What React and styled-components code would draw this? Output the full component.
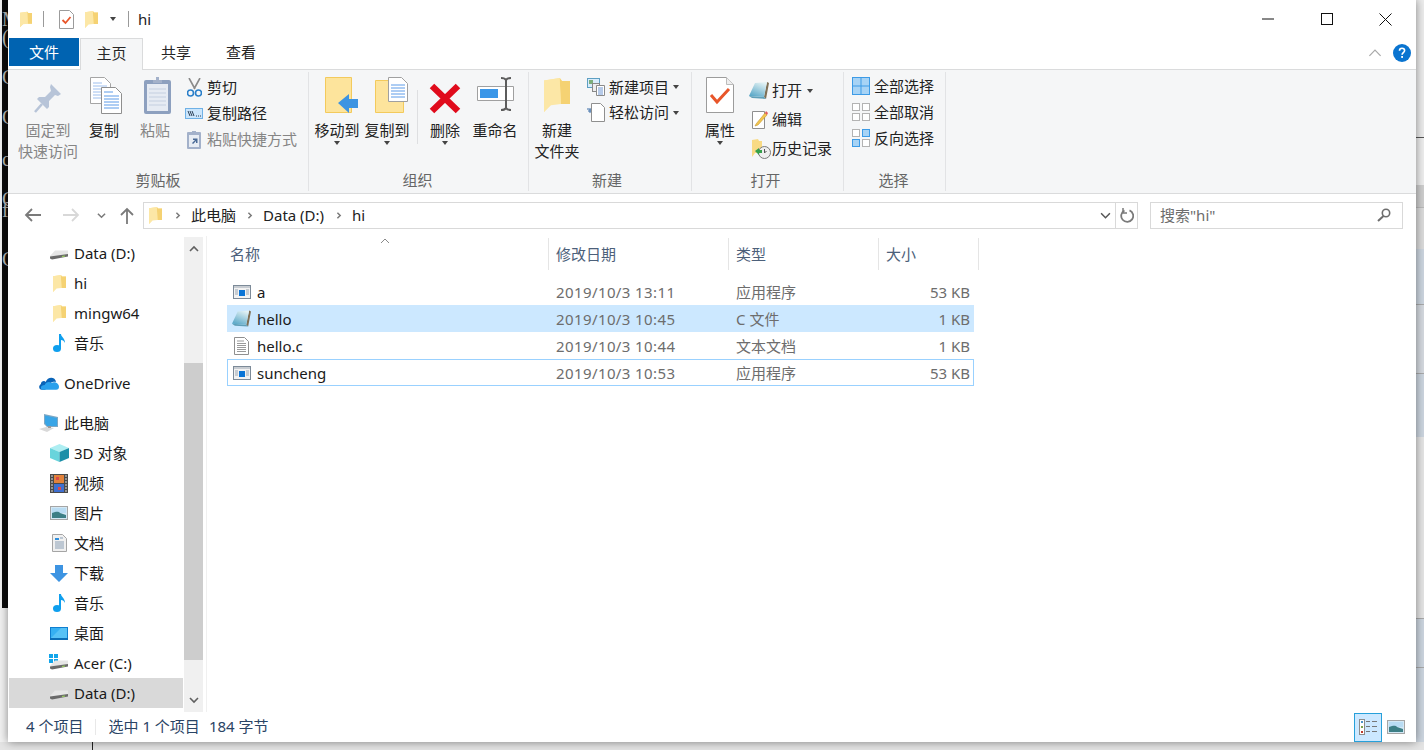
import styled, { createGlobalStyle } from "styled-components";

const GlobalStyle = createGlobalStyle`
  html, body { margin: 0; padding: 0; overflow: hidden; background: #f0f0f0; }
  body { font: 15px/1 "Noto Sans", "Noto Sans CJK SC", sans-serif; color: #1c1c1c; }
`;

const Page = styled.div`
  display: grid;
  grid-template-columns: 8px 1fr 8px;
  grid-template-rows: 742px 8px;
  width: 1424px;
  height: 750px;
  overflow: hidden;
`;

/* stuff peeking out behind the explorer window */
const Terminal = styled.div`
  height: 608px;
  margin-left: 2px;
  background: #0c0c0c;
  overflow: hidden;
  font: 20px/11px "Liberation Serif", serif;
  color: #b9b9b9;
`;
const TermChar = styled.div`
  margin-top: ${(p) => p.$gap}px;
`;
const LeftStrip = styled.div`
  background: #f2f2f2;
`;
const RightStrip = styled.div`
  display: flex;
  flex-direction: column;
  background: #f0f0f0;
`;
const BackRow = styled.div`
  height: ${(p) => p.$h}px;
  flex: none;
  background: ${(p) => p.$bg};
  border-bottom: 1px solid ${(p) => p.$line || "transparent"};
`;
const BottomStrip = styled.div`
  grid-column: 1 / -1;
  background: #e4e4e4;
  padding-left: 92px;
`;
const BackLine = styled.div`
  width: 1px;
  height: 8px;
  background: #222;
`;

const Window = styled.div`
  position: relative;
  z-index: 1;
  display: flex;
  flex-direction: column;
  background: #fff;
  box-shadow: 0 0 9px rgba(0, 0, 0, 0.45);
  min-width: 0;
`;

const TitleBar = styled.div`
  display: flex;
  align-items: center;
  height: 38px;
  flex: none;
  padding-left: 12px;
`;
const QuickSlot = styled.span`
  display: flex;
  justify-content: center;
  align-items: center;
  width: ${(p) => p.$w}px;
`;
const TitleSep = styled.span`
  width: 1px;
  height: 16px;
  background: #9a9a9a;
`;
const TitleText = styled.span`
  margin-left: 9px;
  font-size: 15px;
  color: #222;
`;
const WinButtons = styled.div`
  display: flex;
  margin-left: auto;
  margin-right: 1px;
`;
const WinButton = styled.span`
  display: flex;
  justify-content: center;
  align-items: center;
  width: 59px;
  height: 38px;
`;

const TabBar = styled.div`
  display: flex;
  align-items: flex-start;
  height: 31px;
  flex: none;
  padding-left: 1px;
`;
const FileTab = styled.div`
  width: 70px;
  height: 28px;
  line-height: 28px;
  margin-right: 1px;
  text-align: center;
  color: #fff;
  background: #0063b1;
`;
const Tab = styled.div`
  width: ${(p) => p.$w}px;
  height: ${(p) => (p.$active ? 32 : 28)}px;
  line-height: 28px;
  text-align: center;
  color: #262626;
  box-sizing: border-box;
  position: relative;
  z-index: 2;
  ${(p) =>
    p.$active &&
    "background: #f5f6f7; border: 1px solid #dadbdc; border-bottom: none;"}
`;
const RibbonTools = styled.div`
  display: flex;
  align-items: center;
  gap: 11px;
  height: 30px;
  margin-left: auto;
  margin-right: 5px;
`;

const Ribbon = styled.div`
  display: flex;
  height: 125px;
  flex: none;
  box-sizing: border-box;
  padding: 2px 0 2px;
  background: #f5f6f7;
  border-top: 1px solid #dadbdc;
  border-bottom: 1px solid #dadbdc;
`;
const Group = styled.div`
  display: flex;
  flex-direction: column;
  width: ${(p) => p.$w}px;
  box-sizing: border-box;
  border-right: 1px solid #e2e3e5;
`;
const GroupBody = styled.div`
  display: flex;
  flex: 1;
  padding: 5px 0 0 ${(p) => p.$pad}px;
`;
const GroupLabel = styled.div`
  height: 21px;
  line-height: 21px;
  padding-right: ${(p) => p.$shift || 0}px;
  text-align: center;
  color: #666;
`;
const BigButton = styled.div`
  display: flex;
  flex-direction: column;
  align-items: center;
  width: ${(p) => p.$w}px;
  flex: none;
  color: ${(p) => (p.$off ? "#858585" : "#222")};
`;
const BigIcon = styled.div`
  display: flex;
  justify-content: center;
  align-items: ${(p) => p.$align || "flex-start"};
  height: 43px;
  padding-left: ${(p) => p.$shift || 0}px;
`;
const BigLabel = styled.div`
  line-height: 21px;
  text-align: center;
  white-space: nowrap;
`;
const Caret = styled.span`
  display: inline-block;
  flex: none;
  width: 0;
  height: 0;
  border: 3.5px solid transparent;
  border-top: 4px solid #444;
  border-bottom: none;
  margin-left: ${(p) => p.$ml || 0}px;
`;
const BigSep = styled.div`
  width: 1px;
  height: 54px;
  margin: 13px 5px 0;
  background: #dedfe1;
`;
const SmallColumn = styled.div`
  display: flex;
  flex-direction: column;
  margin-left: ${(p) => p.$ml || 0}px;
  margin-top: ${(p) => p.$mt || 0}px;
`;
const SmallRow = styled.div`
  display: flex;
  align-items: center;
  height: ${(p) => p.$h}px;
  white-space: nowrap;
  color: ${(p) => (p.$off ? "#858585" : "#222")};
`;
const SmallIcon = styled.span`
  display: flex;
  align-items: center;
  box-sizing: border-box;
  width: ${(p) => p.$w || 22}px;
  padding-left: ${(p) => p.$pl || 0}px;
  flex: none;
`;

const AddressBar = styled.div`
  display: flex;
  align-items: center;
  height: 42px;
  flex: none;
  padding-left: 6px;
`;
const NavButton = styled.span`
  display: flex;
  justify-content: center;
  align-items: center;
  width: ${(p) => p.$w}px;
`;
const AddressBox = styled.div`
  display: flex;
  align-items: center;
  width: 995px;
  height: 27px;
  margin-left: 1px;
  box-sizing: border-box;
  border: 1px solid #d9d9d9;
  padding-left: 5px;
  color: #222;
`;
const CrumbSep = styled.span`
  display: flex;
  margin: 0 9px 0 ${(p) => p.$ml}px;
`;
const AddressEnd = styled.span`
  display: flex;
  margin-left: auto;
  margin-right: 4px;
`;
const Refresh = styled.span`
  display: flex;
  justify-content: center;
  align-items: center;
  width: 21px;
  height: 25px;
  border-left: 1px solid #d9d9d9;
`;
const SearchBox = styled.div`
  display: flex;
  align-items: center;
  justify-content: space-between;
  width: 253px;
  height: 27px;
  margin-left: 12px;
  box-sizing: border-box;
  border: 1px solid #d9d9d9;
  padding: 0 11px 0 9px;
  color: #6d6d6d;
`;

const Content = styled.div`
  display: flex;
  flex: 1;
  min-height: 0;
  padding-left: 1px;
`;
const Sidebar = styled.div`
  width: 174px;
  flex: none;
  padding-top: 2px;
`;
const SideRow = styled.div`
  display: flex;
  align-items: center;
  height: 30px;
  margin-top: ${(p) => (p.$spaced ? 10 : 0)}px;
  padding-left: ${(p) => p.$indent}px;
  background: ${(p) => (p.$selected ? "#d9d9d9" : "transparent")};
  color: #1a1a1a;
`;
const SideIcon = styled.span`
  display: flex;
  justify-content: center;
  align-items: center;
  width: 20px;
  margin-right: 5px;
  flex: none;
`;
const Scrollbar = styled.div`
  display: flex;
  flex-direction: column;
  align-items: center;
  justify-content: space-between;
  width: 19px;
  flex: none;
  margin: 1px 3px 0 1px;
  background: #f0f0f0;
`;
const ScrollArrow = styled.span`
  display: flex;
  align-items: center;
  height: 24px;
`;
const ScrollThumb = styled.div`
  flex: none;
  width: 19px;
  height: 297px;
  margin-top: 101px;
  margin-bottom: 28px;
  background: #cdcdcd;
`;
const Main = styled.div`
  flex: 1;
  border-left: 1px solid #f0f0f0;
  padding: 2px 0 0 16px;
`;

const columns = "326px 180px 150px 100px";
const HeaderRow = styled.div`
  display: grid;
  grid-template-columns: ${columns};
  height: 32px;
  position: relative;
`;
const HeaderCell = styled.div`
  display: flex;
  align-items: center;
  box-sizing: border-box;
  padding-left: 7px;
  border-right: 1px solid #e5e5e5;
  color: #4c607a;
`;
const SortMark = styled.span`
  position: absolute;
  left: 157px;
  top: -2px;
  display: flex;
`;
const FileList = styled.div`
  margin: 8px 0 0 4px;
  width: 747px;
`;
const rowBorder = (p) => {
  if (p.$focused) return "#99d1ff";
  if (p.$selected) return "#cce8ff";
  return "transparent";
};
const FileRow = styled.div`
  display: grid;
  grid-template-columns: 322px 180px 150px 95px;
  align-items: center;
  height: 27px;
  box-sizing: border-box;
  border-width: 1px;
  border-style: solid;
  border-color: ${rowBorder};
  background: ${(p) => (p.$selected ? "#cce8ff" : "transparent")};
`;
const NameCell = styled.div`
  display: flex;
  align-items: center;
  padding-top: 2px;
  color: #1a1a1a;
`;
const FileIcon = styled.span`
  display: flex;
  justify-content: center;
  box-sizing: border-box;
  width: 23px;
  padding-left: 4px;
  margin: -2px 6px 0 0;
`;
const InfoCell = styled.div`
  padding-top: 2px;
  padding-left: ${(p) => (p.$right ? 0 : 6)}px;
  padding-right: ${(p) => (p.$right ? 5 : 0)}px;
  text-align: ${(p) => (p.$right ? "right" : "left")};
  letter-spacing: ${(p) => (p.$wide ? 0.4 : 0)}px;
  color: #6d6d6d;
  white-space: nowrap;
`;

const StatusBar = styled.div`
  display: flex;
  align-items: center;
  height: 30px;
  flex: none;
  box-sizing: border-box;
  padding: 0 11px 0 18px;
  color: #2a4465;
`;
const StatusSep = styled.span`
  width: 1px;
  height: 16px;
  margin: 0 12px;
  background: #e8e8e8;
`;
const StatusText = styled.span`
  margin-right: ${(p) => p.$mr || 0}px;
  margin-top: -2px;
`;
const ViewButtons = styled.div`
  display: flex;
  align-items: center;
  gap: 5px;
  margin-left: auto;
`;
const ViewButton = styled.span`
  display: flex;
  justify-content: center;
  align-items: center;
  width: 28px;
  height: 29px;
  box-sizing: border-box;
  background: #cce8ff;
  border: 1px solid #26a0da;
`;

/* ---- icons ---- */
const FolderIcon = ({ w = 13, h = 17 }) => (
  <svg width={w} height={h} viewBox="0 0 13 17">
    <path d="M0 1.2 8 0l1 1.5h4V13H3.5L0 17z" fill="#fde59f" />
    <path d="M7.8 0 9 1.5h4V13H8.5z" fill="#f5d273" />
    <path d="M0 1.2 7.8 0l.7 13-5 .6L0 17z" fill="#fce7a6" />
  </svg>
);
const TaskIcon = ({ w = 15, h = 19 }) => (
  <svg width={w} height={h} viewBox="0 0 15 19">
    <path d="M.5.5h10l4 4v14H.5z" fill="#fff" stroke="#9b9b9b" />
    <path d="M3.5 10l3 3 5-6" fill="none" stroke="#e8562a" strokeWidth="1.8" />
  </svg>
);
const PinIcon = () => (
  <svg width="28" height="30" viewBox="0 0 28 30">
    <path d="M17 0l10 10-3 2-3-1-6 6v6l-2 2L3 15l2-2h6l6-6-1-4z" fill="#b7c4d8" />
    <path d="M8 20l-7 8" stroke="#b7c4d8" strokeWidth="2.500" />
  </svg>
);
const CopyIcon = () => (
  <svg width="32" height="37" viewBox="0 0 32 37">
    <path d="M.5.5h14l6 6v20H.5z" fill="#fff" stroke="#a5a5a5" />
    <path d="M3 6h9M3 9h14M3 12h14M3 15h14M3 18h14M3 21h14" stroke="#9ebfee" />
    <path d="M11.5 10.5h14l6 6v20h-20z" fill="#fff" stroke="#8f8f8f" />
    <path d="M14 15h9M14 19h15M14 22h15M14 25h15M14 28h15M14 31h15" stroke="#5d9be8" />
  </svg>
);
const PasteIcon = () => (
  <svg width="27" height="37" viewBox="0 0 27 37">
    <rect x="0" y="3" width="27" height="34" rx="2" fill="#8da0bf" />
    <rect x="3" y="7" width="21" height="27" fill="#e6ebf3" />
    <path d="M5 12h17M5 16h17M5 20h17M5 24h17M5 28h17" stroke="#c4cfe0" />
    <path d="M9 6V3h3V0h3v3h3v3z" fill="#a3b1ca" />
  </svg>
);
const ScissorsIcon = () => (
  <svg width="15" height="19" viewBox="0 0 15 19">
    <path d="M2 0l6 11M13 0L7 11" stroke="#8a8a8a" strokeWidth="1.6" />
    <circle cx="3.5" cy="15" r="3" fill="none" stroke="#2b7fc9" strokeWidth="1.6" />
    <circle cx="11.5" cy="15" r="3" fill="none" stroke="#2b7fc9" strokeWidth="1.6" />
  </svg>
);
const PathIcon = () => (
  <svg width="18" height="11" viewBox="0 0 18 11">
    <rect x=".5" y=".5" width="17" height="10" fill="#cbe5fb" stroke="#6fb1e6" />
    <path d="M3 3l2 5M5 3l2 5M7 3l2 5" stroke="#2c3f55" />
    <path d="M11 8h1M13 8h1M15 8h1" stroke="#2c3f55" />
  </svg>
);
const ShortcutIcon = () => (
  <svg width="14" height="19" viewBox="0 0 14 19">
    <rect x="0" y="2" width="14" height="17" rx="1" fill="#a3b1ca" />
    <rect x="2" y="5" width="10" height="12" fill="#e8edf4" />
    <path d="M5 1h4v3H5z" fill="#a3b1ca" />
    <path d="M5 13l3-3H6V8.500h4.500V13H9v-2l-3 3z" fill="#4a6a96" />
  </svg>
);
const MoveToIcon = () => (
  <svg width="33" height="37" viewBox="0 0 33 37">
    <path d="M.5.500h26v35H.5z" fill="#fde49c" stroke="#f3ca5c" />
    <path d="M13 26l11-9v5h9v9h-9v5z" fill="#3d94e2" />
  </svg>
);
const CopyToIcon = () => (
  <svg width="33" height="37" viewBox="0 0 33 37">
    <path d="M.5 3.500h28v32H.5z" fill="#fde49c" stroke="#f3ca5c" />
    <path d="M13.500.5h13l6 6v18h-19z" fill="#fff" stroke="#a0a0a0" />
    <path d="M16 8h14M16 11h14M16 14h14M16 17h14M16 20h14" stroke="#5d9be8" />
  </svg>
);
const DeleteIcon = () => (
  <svg width="32" height="31" viewBox="0 0 32 31">
    <path d="M3 3l26 25M29 3L3 28" stroke="#e00b1c" strokeWidth="6.500" />
  </svg>
);
const RenameIcon = () => (
  <svg width="37" height="34" viewBox="0 0 37 34">
    <path d="M.5 9.500h36v14H.5z" fill="#fff" stroke="#a0a0a0" />
    <rect x="3" y="12" width="18" height="9" fill="#3b97e8" />
    <path d="M24 1c2 0 4 0 5 2 1-2 3-2 5-2M29 3v28M24 33c2 0 4 0 5-2 1 2 3 2 5 2" fill="none" stroke="#5c5c5c" strokeWidth="2" />
  </svg>
);
const NewItemIcon = () => (
  <svg width="18" height="18" viewBox="0 0 18 18">
    <rect x=".5" y=".5" width="12" height="9" fill="#d8ecfb" stroke="#5d9fc2" />
    <rect x="2" y="2" width="4" height="4" fill="#7cae7c" />
    <rect x="5.500" y="5.500" width="7" height="8" fill="#eee" stroke="#888" />
    <path d="M9.500 7.500h8v10h-8z" fill="#fff" stroke="#8a8a8a" />
    <path d="M11 10h5M11 12h5M11 14h5M11 16h5" stroke="#6d95d2" />
  </svg>
);
const EasyAccessIcon = () => (
  <svg width="18" height="19" viewBox="0 0 18 19">
    <path d="M4.500.5h9l4 4v14h-13z" fill="#fff" stroke="#8f8f8f" />
    <path d="M0 6h4M1 8h3M3 6v4" stroke="#3d6fa8" />
  </svg>
);
const PropsIcon = () => (
  <svg width="28" height="36" viewBox="0 0 28 36">
    <path d="M.5.500h20l7 7v28H.5z" fill="#fff" stroke="#9c9c9c" />
    <path d="M20.500.5v7h7" fill="#eee" stroke="#bbb" />
    <path d="M5 18l6 7 12-13" fill="none" stroke="#e8562a" strokeWidth="3" />
  </svg>
);
const NotebookIcon = () => (
  <svg width="20" height="18" viewBox="0 0 20 18">
    <defs>
      <linearGradient id="noteFace" x1="0.7" y1="0" x2="0.2" y2="1">
        <stop offset="0" stopColor="#e3f2f4" />
        <stop offset="1" stopColor="#55a5c6" />
      </linearGradient>
    </defs>
    <path d="M18 0l2 1-3 16-2-2z" fill="#7f6f55" />
    <path d="M0 14l15 1 2 2-14-1z" fill="#5f9fb8" />
    <path d="M6 1l12-1-3 15-15-1z" fill="url(#noteFace)" />
  </svg>
);
const EditIcon = () => (
  <svg width="16" height="19" viewBox="0 0 16 19">
    <path d="M.5 1.500h12v17H.5z" fill="#fff" stroke="#8f8f8f" />
    <path d="M4 14l9-11 2 2-9 10-3 1z" fill="#f3c64f" stroke="#b98a22" strokeWidth=".5" />
    <path d="M13 3l1-2 2 2-1 2z" fill="#e45b5b" />
  </svg>
);
const HistoryIcon = () => (
  <svg width="19" height="20" viewBox="0 0 19 20">
    <path d="M0 1l6-1 1 2h3v12H3l-3 4z" fill="#f8da84" />
    <circle cx="12.500" cy="13.500" r="6" fill="#eee" stroke="#7a7a7a" />
    <path d="M12.500 10v4l2-2" fill="none" stroke="#555" />
    <path d="M3 12l4-3v2h3v3H7v2z" fill="#35a04b" />
  </svg>
);
const Cells = ({ colors }) => (
  <svg width="18" height="18" viewBox="0 0 18 18">
    {[
      [0, 0],
      [10, 0],
      [0, 10],
      [10, 10],
    ].map(([x, y], i) => (
      <rect
        key={i}
        x={x + 0.5}
        y={y + 0.5}
        width="7"
        height="7"
        fill={colors[i][0]}
        stroke={colors[i][1]}
      />
    ))}
  </svg>
);
const blueCell = ["#a7d3f5", "#3d9be6"];
const greyCell = ["#fff", "#b3b3b3"];
const SelectAllIcon = () => (
  <svg width="18" height="18" viewBox="0 0 18 18">
    <rect width="18" height="18" fill="#3d9be6" />
    <path d="M1 1h7.500v7.500H1zM9.500 1H17v7.500H9.500zM1 9.500h7.500V17H1zM9.500 9.500H17V17H9.500z" fill="#a7d3f5" />
  </svg>
);

const DriveIcon = ({ win }) => (
  <svg width="20" height="18" viewBox="0 0 20 18">
    {win && <path d="M0 0h4v4H0zM5 0h4v4H5zM0 5h4v4H0zM5 5h4v4H5z" fill="#12a5ea" />}
    <path d="M1 12l5-5.500h13V11L2 14z" fill="#e6e6e6" />
    <path d="M1 12.500l18-2.500v2.500L3 15.500l-2-1z" fill="#6a6a6a" />
    <path d="M13 12.500l3-.5" stroke="#9bd65a" strokeWidth="1.200" />
  </svg>
);
const NoteIcon = () => (
  <svg width="12" height="18" viewBox="0 0 12 18">
    <ellipse cx="4" cy="14.500" rx="4" ry="3.500" fill="#0f9fee" />
    <path d="M6 0h2c0 3 4 4 4 9-1-2-2-3-4-3v9H6z" fill="#0f9fee" />
  </svg>
);
const OneDriveIcon = () => (
  <svg width="21" height="14" viewBox="0 0 21 14">
    <path d="M3 14C0 14-1 10 2 8c0-3 4-4 5-2 2-6 10-6 11 0-3-1-8 1-8 4-3 0-4 2-3 4z" fill="#0a64b8" />
    <path d="M4 14c-3 0-3-5 2-5 1-3 5-4 7-2 3-2 8 0 8 4 0 2-1 3-3 3z" fill="#29a0ec" />
  </svg>
);
const PcIcon = () => (
  <svg width="20" height="18" viewBox="0 0 20 18">
    <path d="M5 0l14 3v10L8 13 5 10z" fill="#7fa8c4" />
    <path d="M6 1.500l12 2.500v8L8 12 6 9z" fill="#39a5e6" />
    <path d="M0 15l7-2 8 1-7 4z" fill="#d9d9d9" />
    <path d="M9 12h3v2H9z" fill="#9a9a9a" />
  </svg>
);
const CubeIcon = () => (
  <svg width="19" height="18" viewBox="0 0 19 18">
    <path d="M9.500 0L19 4l-9.500 4L0 4z" fill="#aeeef2" />
    <path d="M0 4l9.500 4v10L0 14z" fill="#68d4dc" />
    <path d="M19 4L9.500 8v10l9.500-4z" fill="#1b8fa8" />
  </svg>
);
const VideoIcon = () => (
  <svg width="18" height="19" viewBox="0 0 18 19">
    <rect width="18" height="19" fill="#4a4a4a" />
    <rect x="4" y="1" width="10" height="8" fill="#e2823b" />
    <rect x="4" y="10" width="10" height="8" fill="#3f6fd0" />
    <path d="M6 3h3v3H6zM8 13h3v3H8z" fill="#d94a4a" />
    <path d="M1 2h2M1 5h2M1 8h2M1 11h2M1 14h2M1 17h2M15 2h2M15 5h2M15 8h2M15 11h2M15 14h2M15 17h2" stroke="#ddd" />
  </svg>
);
const PictureIcon = ({ w = 18, h = 14 }) => (
  <svg width={w} height={h} viewBox="0 0 18 14">
    <rect x=".5" y=".5" width="17" height="13" fill="#d3e8f5" stroke="#a5a5a5" strokeWidth="1" />
    <path d="M2 2h14v5H2z" fill="#b9dcf3" />
    <path d="M2 7c4-1 6-2 8 0l6 2v3H2z" fill="#3d7f86" />
  </svg>
);
const DocIcon = () => (
  <svg width="15" height="18" viewBox="0 0 15 18">
    <path d="M.5.500h10l4 4v13H.5z" fill="#f0f0f0" stroke="#a5a5a5" />
    <path d="M3 4h4v2H3z" fill="#2f8fdc" />
    <path d="M8 4h3M3 8h9M3 10h9M3 12h9M3 14h9" stroke="#8a9fb5" />
  </svg>
);
const DownloadIcon = () => (
  <svg width="18" height="17" viewBox="0 0 18 17">
    <path d="M5 0h8v8h5l-9 9-9-9h5z" fill="#3d94e2" />
  </svg>
);
const DesktopIcon = () => (
  <svg width="18" height="13" viewBox="0 0 18 13">
    <rect width="18" height="13" fill="#0f7fd0" />
    <path d="M1 1h16v10H1z" fill="#36b0f2" />
    <path d="M1 11L11 1h6v10z" fill="#57c2f6" />
    <path d="M0 12h18" stroke="#0a5f9e" />
  </svg>
);
const AppIcon = () => (
  <svg width="18" height="14" viewBox="0 0 18 14">
    <rect x=".5" y=".5" width="17" height="13" fill="#f2f2f2" stroke="#7c8a98" />
    <path d="M1 1h16v2H1z" fill="#c7ccd2" />
    <rect x="6" y="5" width="6" height="6" fill="#0a74d6" />
    <path d="M2 5h3M2 7h3M2 9h3M13 5h3M13 7h3M13 9h3" stroke="#9ba6b2" />
  </svg>
);
const TextFileIcon = () => (
  <svg width="15" height="18" viewBox="0 0 15 18">
    <path d="M.5.500h10l4 4v13H.5z" fill="#fff" stroke="#8f8f8f" />
    <path d="M3 4h7M3 6.500h9M3 8.500h9M3 10.500h9M3 12.500h9M3 14.500h9" stroke="#9a9a9a" />
  </svg>
);
const Chevron = ({ dir = "right", size = 7, color = "#7a7a7a", width = 1.5 }) => {
  const paths = {
    right: "M2 1l4 4-4 4",
    down: "M1 3l4 4 4-4",
    up: "M1 7l4-4 4 4",
  };
  return (
    <svg width={size} height={size} viewBox="0 0 10 10">
      <path d={paths[dir]} fill="none" stroke={color} strokeWidth={(width * 10) / size} />
    </svg>
  );
};
const ArrowIcon = ({ dir, color }) => (
  <svg width="18" height="14" viewBox="0 0 18 14">
    {dir === "left" ? (
      <path d="M17 7H2M8 1L2 7l6 6" fill="none" stroke={color} strokeWidth="1.800" />
    ) : (
      <path d="M1 7h15M10 1l6 6-6 6" fill="none" stroke={color} strokeWidth="1.800" />
    )}
  </svg>
);
const UpIcon = () => (
  <svg width="14" height="17" viewBox="0 0 14 17">
    <path d="M7 17V2M1 8l6-6 6 6" fill="none" stroke="#7a7a7a" strokeWidth="1.800" />
  </svg>
);
const RefreshIcon = () => (
  <svg width="15" height="15" viewBox="0 0 15 15">
    <path d="M5.500 2.500a6 6 0 1 0 5-.2" fill="none" stroke="#7a7a7a" strokeWidth="1.800" />
    <path d="M4 0v5h4" fill="none" stroke="#7a7a7a" strokeWidth="1.500" />
  </svg>
);
const SearchIcon = () => (
  <svg width="14" height="14" viewBox="0 0 14 14">
    <circle cx="9" cy="5" r="3.700" fill="none" stroke="#6d6d6d" strokeWidth="1.600" />
    <path d="M6.500 8L1 13" stroke="#6d6d6d" strokeWidth="2" />
  </svg>
);
const HelpIcon = () => (
  <svg width="18" height="18" viewBox="0 0 18 18">
    <circle cx="9" cy="9" r="9" fill="#0a74d0" />
    <path d="M6.500 6.800C6.500 5 7.700 4.300 9 4.300c1.500 0 2.600.9 2.600 2.300 0 2-2.500 2.200-2.500 4.200" fill="none" stroke="#fff" strokeWidth="1.600" />
    <rect x="8.200" y="12" width="1.800" height="1.900" fill="#fff" />
  </svg>
);
const DetailsViewIcon = () => (
  <svg width="18" height="16" viewBox="0 0 18 16">
    <rect x=".5" y=".5" width="5" height="15" fill="#fff" stroke="#8c8c8c" />
    <path d="M2 2h2v2H2z" fill="#4a93c9" />
    <path d="M2 7h2v2H2z" fill="#7aa24f" />
    <path d="M2 12h2v2H2z" fill="#c0392b" />
    <path d="M7 2.500h4M13 2.500h5M7 7.500h4M13 7.500h5M7 12.500h4M13 12.500h5" stroke="#777" />
  </svg>
);

const sideItems = [
  { icon: <DriveIcon />, label: "Data (D:)" },
  { icon: <FolderIcon />, label: "hi" },
  { icon: <FolderIcon />, label: "mingw64" },
  { icon: <NoteIcon />, label: "音乐" },
  { icon: <OneDriveIcon />, label: "OneDrive", indent: 30, spaced: true },
  { icon: <PcIcon />, label: "此电脑", indent: 30, spaced: true },
  { icon: <CubeIcon />, label: "3D 对象" },
  { icon: <VideoIcon />, label: "视频" },
  { icon: <PictureIcon />, label: "图片" },
  { icon: <DocIcon />, label: "文档" },
  { icon: <DownloadIcon />, label: "下载" },
  { icon: <NoteIcon />, label: "音乐" },
  { icon: <DesktopIcon />, label: "桌面" },
  { icon: <DriveIcon win />, label: "Acer (C:)" },
  { icon: <DriveIcon />, label: "Data (D:)", selected: true },
];

const files = [
  { icon: <AppIcon />, name: "a", date: "2019/10/3 13:11", type: "应用程序", size: "53 KB" },
  { icon: <NotebookIcon />, name: "hello", date: "2019/10/3 10:45", type: "C 文件", size: "1 KB", selected: true },
  { icon: <TextFileIcon />, name: "hello.c", date: "2019/10/3 10:44", type: "文本文档", size: "1 KB" },
  { icon: <AppIcon />, name: "suncheng", date: "2019/10/3 10:53", type: "应用程序", size: "53 KB", focused: true },
];

const backRows = [
  { h: 137, bg: "#ededed", line: "#555" },
  { h: 46, bg: "#efefef" },
  { h: 22, bg: "#cfcfcf", line: "#bbb" },
  { h: 40, bg: "#dcdcdc" },
  { h: 55, bg: "#cdd6e0", line: "#aaa" },
  { h: 68, bg: "#d5dae0", line: "#aaa" },
  { h: 62, bg: "#cdd6e0" },
  { h: 181, bg: "#e6e6e6", line: "#aaa" },
  { h: 48, bg: "#cdd6e0", line: "#aaa" },
  { h: 83, bg: "#cdd6e0" },
];

const termChars = [
  ["M", 14],
  ["(", 7],
  ["C", 29],
  ["C", 29],
  ["c", 31],
  ["C", 29],
  ["f", 0],
  ["C", 38],
];

export default function App() {
  return (
    <Page>
      <GlobalStyle />
      <LeftStrip>
        <Terminal>
          {termChars.map(([c, gap], i) => (
            <TermChar key={i} $gap={gap}>
              {c}
            </TermChar>
          ))}
        </Terminal>
      </LeftStrip>
      <Window>
        <TitleBar>
          <QuickSlot $w={12}>
            <FolderIcon />
          </QuickSlot>
          <QuickSlot $w={11} />
          <TitleSep />
          <QuickSlot $w={15} />
          <TaskIcon />
          <QuickSlot $w={11} />
          <FolderIcon />
          <QuickSlot $w={30}>
            <Caret />
          </QuickSlot>
          <TitleSep />
          <TitleText>hi</TitleText>
          <WinButtons>
            <WinButton>
              <svg width="12" height="12" viewBox="0 0 12 12">
                <path d="M0 6h12" stroke="#111" />
              </svg>
            </WinButton>
            <WinButton>
              <svg width="12" height="12" viewBox="0 0 12 12">
                <rect x=".5" y=".5" width="11" height="11" fill="none" stroke="#111" />
              </svg>
            </WinButton>
            <WinButton>
              <svg width="13" height="13" viewBox="0 0 13 13">
                <path d="M.5.5l12 12M12.500.5l-12 12" stroke="#111" />
              </svg>
            </WinButton>
          </WinButtons>
        </TitleBar>
        <TabBar>
          <FileTab>文件</FileTab>
          <Tab $w={63} $active>
            主页
          </Tab>
          <Tab $w={66}>共享</Tab>
          <Tab $w={64}>查看</Tab>
          <RibbonTools>
            <Chevron dir="up" size={14} color="#a8a8a8" width={1.2} />
            <HelpIcon />
          </RibbonTools>
        </TabBar>
        <Ribbon>
          <Group $w={301}>
            <GroupBody $pad={7}>
              <BigButton $w={66} $off>
                <BigIcon $align="center">
                  <PinIcon />
                </BigIcon>
                <BigLabel>
                  固定到
                  <br />
                  快速访问
                </BigLabel>
              </BigButton>
              <BigButton $w={46}>
                <BigIcon $shift={4}>
                  <CopyIcon />
                </BigIcon>
                <BigLabel>复制</BigLabel>
              </BigButton>
              <BigButton $w={56} $off>
                <BigIcon $shift={4}>
                  <PasteIcon />
                </BigIcon>
                <BigLabel>粘贴</BigLabel>
              </BigButton>
              <SmallColumn $ml={2} $mt={-3}>
                <SmallRow $h={26}>
                  <SmallIcon $pl={2}>
                    <ScissorsIcon />
                  </SmallIcon>
                  剪切
                </SmallRow>
                <SmallRow $h={26}>
                  <SmallIcon>
                    <PathIcon />
                  </SmallIcon>
                  复制路径
                </SmallRow>
                <SmallRow $h={26} $off>
                  <SmallIcon $pl={2}>
                    <ShortcutIcon />
                  </SmallIcon>
                  粘贴快捷方式
                </SmallRow>
              </SmallColumn>
            </GroupBody>
            <GroupLabel>剪贴板</GroupLabel>
          </Group>
          <Group $w={220}>
            <GroupBody $pad={3}>
              <BigButton $w={50}>
                <BigIcon $shift={8}>
                  <MoveToIcon />
                </BigIcon>
                <BigLabel>移动到</BigLabel>
                <Caret />
              </BigButton>
              <BigButton $w={50}>
                <BigIcon $shift={8}>
                  <CopyToIcon />
                </BigIcon>
                <BigLabel>复制到</BigLabel>
                <Caret />
              </BigButton>
              <BigSep />
              <BigButton $w={44}>
                <BigIcon $align="center">
                  <DeleteIcon />
                </BigIcon>
                <BigLabel>删除</BigLabel>
                <Caret />
              </BigButton>
              <BigButton $w={56}>
                <BigIcon>
                  <RenameIcon />
                </BigIcon>
                <BigLabel>重命名</BigLabel>
              </BigButton>
            </GroupBody>
            <GroupLabel $shift={2}>组织</GroupLabel>
          </Group>
          <Group $w={163}>
            <GroupBody $pad={3}>
              <BigButton $w={50}>
                <BigIcon>
                  <FolderIcon w={26} h={36} />
                </BigIcon>
                <BigLabel>
                  新建
                  <br />
                  文件夹
                </BigLabel>
              </BigButton>
              <SmallColumn $ml={5} $mt={-3}>
                <SmallRow $h={26}>
                  <SmallIcon>
                    <NewItemIcon />
                  </SmallIcon>
                  新建项目
                  <Caret $ml={4} />
                </SmallRow>
                <SmallRow $h={25}>
                  <SmallIcon>
                    <EasyAccessIcon />
                  </SmallIcon>
                  轻松访问
                  <Caret $ml={4} />
                </SmallRow>
              </SmallColumn>
            </GroupBody>
            <GroupLabel $shift={6}>新建</GroupLabel>
          </Group>
          <Group $w={152}>
            <GroupBody $pad={6}>
              <BigButton $w={44}>
                <BigIcon>
                  <PropsIcon />
                </BigIcon>
                <BigLabel>属性</BigLabel>
                <Caret />
              </BigButton>
              <SmallColumn $ml={7} $mt={-1}>
                <SmallRow $h={29}>
                  <SmallIcon $w={23}>
                    <NotebookIcon />
                  </SmallIcon>
                  打开
                  <Caret $ml={5} />
                </SmallRow>
                <SmallRow $h={29}>
                  <SmallIcon $w={23} $pl={3}>
                    <EditIcon />
                  </SmallIcon>
                  编辑
                </SmallRow>
                <SmallRow $h={29}>
                  <SmallIcon $w={23} $pl={3}>
                    <HistoryIcon />
                  </SmallIcon>
                  历史记录
                </SmallRow>
              </SmallColumn>
            </GroupBody>
            <GroupLabel $shift={4}>打开</GroupLabel>
          </Group>
          <Group $w={102}>
            <GroupBody $pad={8}>
              <SmallColumn $mt={-4}>
                <SmallRow $h={26}>
                  <SmallIcon>
                    <SelectAllIcon />
                  </SmallIcon>
                  全部选择
                </SmallRow>
                <SmallRow $h={26}>
                  <SmallIcon>
                    <Cells colors={[greyCell, greyCell, greyCell, greyCell]} />
                  </SmallIcon>
                  全部取消
                </SmallRow>
                <SmallRow $h={26}>
                  <SmallIcon>
                    <Cells colors={[greyCell, blueCell, blueCell, greyCell]} />
                  </SmallIcon>
                  反向选择
                </SmallRow>
              </SmallColumn>
            </GroupBody>
            <GroupLabel $shift={2}>选择</GroupLabel>
          </Group>
        </Ribbon>
        <AddressBar>
          <NavButton $w={38}>
            <ArrowIcon dir="left" color="#7a7a7a" />
          </NavButton>
          <NavButton $w={38}>
            <ArrowIcon dir="right" color="#d8d8d8" />
          </NavButton>
          <NavButton $w={22}>
            <Chevron dir="down" size={9} />
          </NavButton>
          <NavButton $w={30}>
            <UpIcon />
          </NavButton>
          <AddressBox>
            <FolderIcon />
            <CrumbSep $ml={13}>
              <Chevron />
            </CrumbSep>
            此电脑
            <CrumbSep $ml={11}>
              <Chevron />
            </CrumbSep>
            Data (D:)
            <CrumbSep $ml={12}>
              <Chevron />
            </CrumbSep>
            hi
            <AddressEnd>
              <Chevron dir="down" size={11} color="#555" />
            </AddressEnd>
            <Refresh>
              <RefreshIcon />
            </Refresh>
          </AddressBox>
          <SearchBox>
            搜索"hi"
            <SearchIcon />
          </SearchBox>
        </AddressBar>
        <Content>
          <Sidebar>
            {sideItems.map((item, i) => (
              <SideRow
                key={i}
                $indent={item.indent || 40}
                $spaced={item.spaced}
                $selected={item.selected}
              >
                <SideIcon>{item.icon}</SideIcon>
                {item.label}
              </SideRow>
            ))}
          </Sidebar>
          <Scrollbar>
            <ScrollArrow>
              <Chevron dir="up" size={10} color="#606060" width={1.6} />
            </ScrollArrow>
            <ScrollThumb />
            <ScrollArrow>
              <Chevron dir="down" size={10} color="#606060" width={1.6} />
            </ScrollArrow>
          </Scrollbar>
          <Main>
            <HeaderRow>
              <HeaderCell>名称</HeaderCell>
              <HeaderCell>修改日期</HeaderCell>
              <HeaderCell>类型</HeaderCell>
              <HeaderCell>大小</HeaderCell>
              <SortMark>
                <Chevron dir="up" size={10} color="#8a8a8a" width={1} />
              </SortMark>
            </HeaderRow>
            <FileList>
              {files.map((f) => (
                <FileRow key={f.name} $selected={f.selected} $focused={f.focused}>
                  <NameCell>
                    <FileIcon>{f.icon}</FileIcon>
                    {f.name}
                  </NameCell>
                  <InfoCell $wide>{f.date}</InfoCell>
                  <InfoCell>{f.type}</InfoCell>
                  <InfoCell $right>{f.size}</InfoCell>
                </FileRow>
              ))}
            </FileList>
          </Main>
        </Content>
        <StatusBar>
          <StatusText>4 个项目</StatusText>
          <StatusSep />
          <StatusText $mr={9}>选中 1 个项目</StatusText>
          <StatusText>184 字节</StatusText>
          <ViewButtons>
            <ViewButton>
              <DetailsViewIcon />
            </ViewButton>
            <PictureIcon />
          </ViewButtons>
        </StatusBar>
      </Window>
      <RightStrip>
        {backRows.map((r, i) => (
          <BackRow key={i} $h={r.h} $bg={r.bg} $line={r.line} />
        ))}
      </RightStrip>
      <BottomStrip>
        <BackLine />
      </BottomStrip>
    </Page>
  );
}
